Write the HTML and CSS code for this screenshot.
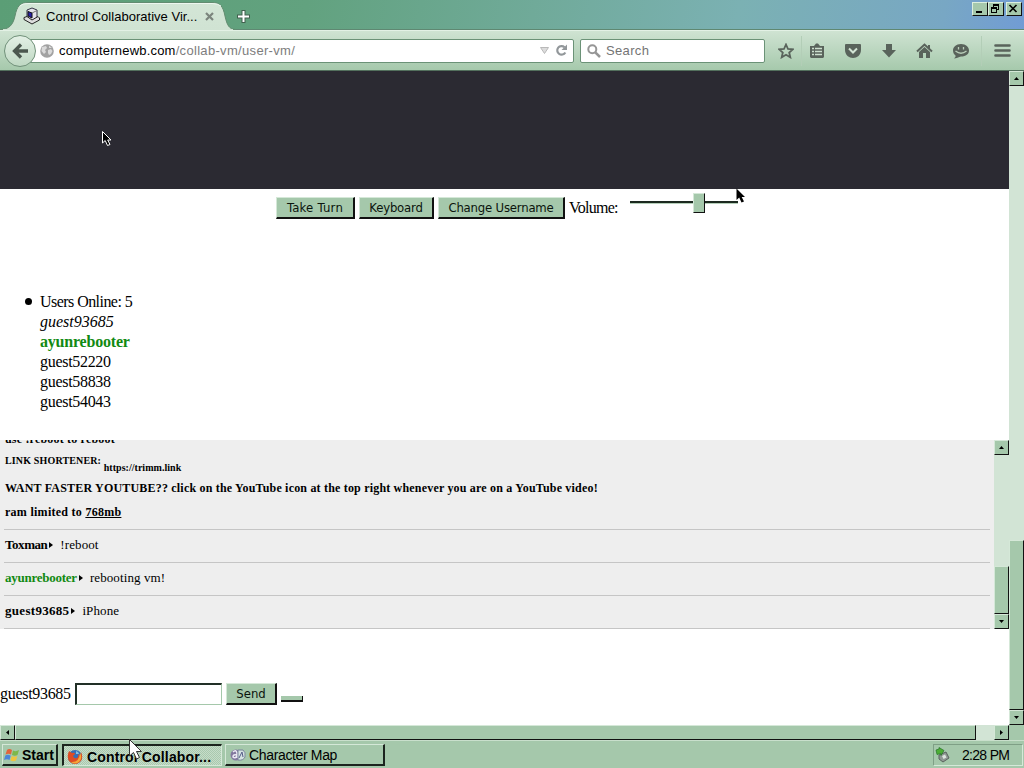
FILE: index.html
```
<!DOCTYPE html>
<html lang="en">
<head>
<meta charset="utf-8">
<title>Control Collaborative Virtual Machines</title>
<link rel="stylesheet" href="styles.css">
</head>
<body>

<div class="titlebar">
  <div class="tab">
    <svg class="tab-shape" width="236" height="29" viewBox="0 0 236 29">
      <defs><linearGradient id="tabfill" x1="0" y1="0" x2="0" y2="1"><stop offset="0" stop-color="#d3e6d6"/><stop offset="1" stop-color="#d0e3d3"/></linearGradient></defs>
      <path d="M0 28.5C9 28.5 13 24 15 15C17 5 20 1.5 28 1.5H212C220 1.5 223 5 225 15C227 24 229 28.5 236 28.5Z" fill="url(#tabfill)" stroke="#628c70"/>
      <path d="M20 5Q22 2.500 28 2.500H212Q218 2.500 221 5" fill="none" stroke="#edf7ef"/>
      <path d="M3 28.5H233" stroke="#d0e3d3"/>
    </svg>
    <svg class="favicon" width="18" height="18" viewBox="0 0 18 18">
      <path d="M4 3L9 1L14 3V11L9 14L4 10Z" fill="#e4e4ea" stroke="#333344"/>
      <path d="M5 4.500L9 6V11L5 9Z" fill="#2820a8" stroke="#111"/>
      <path d="M9 6L14 3.500" stroke="#777"/>
      <path d="M1 10.500L4 9.500L9 13L15 9.500L16.500 11V13L9 17L1 12.500Z" fill="#ddd" stroke="#222"/>
    </svg>
    <span class="tab-title">Control Collaborative Vir...</span>
    <svg class="tab-close" width="9" height="9" viewBox="0 0 9 9"><path d="M1 1L8 8M8 1L1 8" stroke="#7b857d" stroke-width="2.200"/></svg>
  </div>
  <svg class="newtab" width="13" height="13" viewBox="0 0 13 13"><path d="M6.500 0V13M0 6.500H13" stroke="#41604e" stroke-width="4"/><path d="M6.500 1V12M1 6.500H12" stroke="#fff" stroke-width="2"/></svg>
  <div class="winbtns">
    <span class="winbtn"><svg width="15" height="13"><path d="M4 10H10" stroke="#000" stroke-width="2"/></svg></span>
    <span class="winbtn"><svg width="15" height="13" shape-rendering="crispEdges"><path d="M5 2H11V4H5ZM10 3H11V8H9V7H10ZM5 3H6V5H5ZM3 5H9V7H3ZM3 7H4V10H3ZM8 7H9V10H8ZM3 10H9V11H3Z" fill="#000"/></svg></span>
    <span class="winbtn close"><svg width="15" height="13"><path d="M3.500 3L10.500 10M10.500 3L3.500 10" stroke="#000" stroke-width="1.700"/></svg></span>
  </div>
</div>

<div class="toolbar">
  <div class="back"><svg width="18" height="16" viewBox="0 0 18 16"><path d="M9 1.500L2.500 8L9 14.500M3.500 8H16" fill="none" stroke="#4b574e" stroke-width="3.300"/></svg></div>
  <div class="urlbar">
    <svg class="globe" width="14" height="14" viewBox="0 0 14 14"><circle cx="7" cy="7" r="6.800" fill="#a2a2a2"/><path d="M2 3L6 2L7 4L5 6L6 8L4 10L1.500 7ZM8 6L11 5L12.500 7L11 10L9 11L8 9ZM9 1.500L12 4L9 4Z" fill="#dadada"/></svg>
    <span class="url">computernewb.com<span class="path">/collab-vm/user-vm/</span></span>
    <svg class="drop" width="9" height="7" viewBox="0 0 9 7"><path d="M.5 .5H8.500L4.500 6.500Z" fill="#dcdcdc" stroke="#b9b9b9"/></svg>
    <svg class="reload" width="13" height="13" viewBox="0 0 13 13"><path d="M9.500 3.200A4.300 4.300 0 1 0 10.300 8.500" fill="none" stroke="#92979a" stroke-width="2.200"/><path d="M12 .5V6H6.500Z" fill="#92979a"/></svg>
  </div>
  <div class="searchbar">
    <svg width="14" height="14" viewBox="0 0 14 14"><circle cx="5.300" cy="5.300" r="4" fill="none" stroke="#969696" stroke-width="2"/><path d="M8.300 8.300L13 13" stroke="#969696" stroke-width="2.500"/></svg>
    <span>Search</span>
  </div>
  <div class="tools">
    <svg width="16" height="16" viewBox="0 0 16 16"><path d="M8 1.500L10 6L14.800 6.400L11.200 9.500L12.300 14.300L8 11.700L3.700 14.300L4.800 9.500L1.200 6.400L6 6Z" fill="none" stroke="#59635b" stroke-width="1.800"/></svg>
    <i class="sep"></i>
    <svg class="list" width="16" height="16" viewBox="0 0 16 16"><path d="M1 3H5L7 .5H9L11 3H15V14L14 15H2L1 14Z" fill="#59635b"/><path d="M3 5.500H5M6 5.500H13M3 8.500H5M6 8.500H13M3 11.500H5M6 11.500H13" stroke="#cde0cf" stroke-width="1.500"/></svg>
    <svg class="pocket" width="18" height="16" viewBox="0 0 18 16"><path d="M1 2Q1 1 2 1H16Q17 1 17 2V7C17 12 13 15 9 15S1 12 1 7Z" fill="#59635b"/><path d="M5 5.500L9 9.500L13 5.500" fill="none" stroke="#d2e4d4" stroke-width="2"/></svg>
    <svg class="down" width="16" height="16" viewBox="0 0 16 16"><path d="M5 1H11V7H15L8 14.500L1 7H5Z" fill="#59635b"/></svg>
    <svg class="home" width="17" height="16" viewBox="0 0 17 16"><path d="M1 8.500L8.500 1.500L16 8.500" fill="none" stroke="#59635b" stroke-width="2"/><path d="M12 2H14V6H12ZM3 9L8.500 4L14 9V15H10V10H7V15H3Z" fill="#59635b"/></svg>
    <svg class="chat-icon" width="18" height="16" viewBox="0 0 18 16"><path d="M9 1C14 1 17 4 17 7.500S14 13.500 9 13.500C7 14 4 15.500 2 15.500C3 14.500 4 13.500 3.500 12.500C2 11.500 1 9.500 1 7.500C1 4 4 1 9 1Z" fill="#59635b"/><path d="M6.500 4V6.500M11.500 4V6.500" stroke="#b9ceb9" stroke-width="1.300"/><path d="M3.500 8Q9 12.500 14.500 8" fill="none" stroke="#b9ceb9" stroke-width="1.300"/></svg>
    <i class="sep sep-menu"></i>
    <svg class="menu" width="17" height="16" viewBox="0 0 17 16"><path d="M1.500 2.500H15.500M1.500 7.500H15.500M1.500 12.500H15.500" stroke="#59635b" stroke-width="2.600" stroke-linecap="round"/></svg>
  </div>
</div>

<div class="viewport">
  <div class="page">
    <div class="screen"></div>
    <div class="controls">
      <button class="btn turn">Take Turn</button>
      <button class="btn keyboard">Keyboard</button>
      <button class="btn username">Change Username</button>
      <span class="volume">Volume:</span>
      <div class="slider"><i class="before"></i><i class="thumb"></i><i class="after"></i></div>
    </div>
    <ul class="users">
      <li class="count">Users Online: 5</li>
      <li class="me">guest93685</li>
      <li class="bot">ayunrebooter</li>
      <li>guest52220</li>
      <li>guest58838</li>
      <li>guest54043</li>
    </ul>
    <div class="chat">
      <div class="messages">
        <div class="motd">
          <p class="reboot">use !reboot to reboot</p>
          <p class="shortener">LINK SHORTENER: <span class="link">https://trimm.link</span></p>
          <p class="youtube">WANT FASTER YOUTUBE?? click on the YouTube icon at the top right whenever you are on a YouTube video!</p>
          <p class="ram">ram limited to <u>768mb</u></p>
        </div>
        <div class="msg"><b class="toxman">Toxman</b><i class="caret"></i>!reboot</div>
        <div class="msg"><b class="bot">ayunrebooter</b><i class="caret"></i>rebooting vm!</div>
        <div class="msg"><b class="guest">guest93685</b><i class="caret"></i>iPhone</div>
      </div>
      <div class="vscroll">
        <span class="sb"><svg width="5" height="3"><path d="M0 3L2.500 0L5 3Z"/></svg></span>
        <span class="track"></span>
        <span class="sthumb chat-thumb"></span>
        <span class="sb"><svg width="5" height="3"><path d="M0 0L2.500 3L5 0Z"/></svg></span>
      </div>
    </div>
    <div class="send-row">
      <span class="name">guest93685</span>
      <input class="message" type="text">
      <button class="btn send">Send</button>
      <span class="stub"></span>
    </div>
  </div>
  <div class="vscroll">
    <span class="sb"><svg width="5" height="3"><path d="M0 3L2.500 0L5 3Z"/></svg></span>
    <span class="track"></span>
    <span class="sthumb page-thumb"></span>
    <span class="sb"><svg width="5" height="3"><path d="M0 0L2.500 3L5 0Z"/></svg></span>
  </div>
</div>

<div class="hscroll">
  <span class="sb"><svg width="3" height="5"><path d="M3 0L0 2.500L3 5Z"/></svg></span>
  <span class="sthumb h-thumb"></span>
  <span class="track"></span>
  <span class="sb"><svg width="3" height="5"><path d="M0 0L3 2.500L0 5Z"/></svg></span>
  <span class="corner"></span>
</div>

<div class="taskbar">
  <div class="start">
    <svg width="16" height="16" viewBox="0 0 16 16"><path d="M3 3Q5 1 8 3L7 7.500Q4.500 6 1.500 7.500Z" fill="#e2643c"/><path d="M9 3.500Q12 5 15 3L13.500 8Q11 9.500 8 8Z" fill="#7db84a"/><path d="M1.300 8.500Q4 7 6.700 8.700L5.500 13Q3 11.500 0 13Z" fill="#4c86d8"/><path d="M7.700 9Q10.500 10.500 13.300 9L12 13.500Q9 15 6.500 13.500Z" fill="#f0c53e"/></svg>
    <span>Start</span>
  </div>
  <div class="task active">
    <svg width="16" height="16" viewBox="0 0 16 16"><circle cx="8" cy="8" r="7" fill="#356fb5"/><path d="M9 2Q12 3 12 5L9 5Z" fill="#80c2e4"/><path d="M2 2L5 4Q8 3 8 5L6 7Q7 10 10 9Q12 8 11 5Q13 6 13 8L14 3Q17 9 13 13Q8 17 3 13Q-1 9 2 2Z" fill="#dd4d24"/><path d="M13 4Q16 9 12 13Q8 16 4 13Q12 14 13 4Z" fill="#f4a638"/></svg>
    <span>Control Collabor...</span>
  </div>
  <div class="task charmap">
    <svg width="16" height="16" viewBox="0 0 16 16"><ellipse cx="6" cy="8" rx="5.500" ry="5.500" fill="#83789f"/><path d="M3 5Q6 2 7 6V11M7 8Q3 7 3 10Q5 12 7 9" fill="none" stroke="#eceaf4" stroke-width="1.500"/><path d="M8 3H13Q16 5 15 10Q13 14 8 13Z" fill="#d5e3e2" stroke="#79849a"/><path d="M9 11L12 5L13 10" fill="none" stroke="#555c88"/></svg>
    <span>Character Map</span>
  </div>
  <div class="tray">
    <svg width="16" height="16" viewBox="0 0 16 16"><path d="M4 8L11 5L14 11L8 15L4 12Z" fill="#8f9893" stroke="#59635e"/><path d="M7 9L10 7.500L11.500 10.500L8.500 12Z" fill="#dce4de"/><path d="M1 3L4 2V.5L9 3.500L6 8.500V6.500L2 7.500Z" fill="#4cae35" stroke="#27732a" stroke-width=".7"/></svg>
    <span>2:28 PM</span>
  </div>
</div>

<!-- pointers -->
<svg class="pointer p-remote" width="12" height="19" viewBox="0 0 12 19"><path d="M.5 .5V12L3.200 9.500L5.500 14.500L8 13.500L5.700 9H9Z" fill="#000" stroke="#fff"/></svg>
<svg class="pointer p-page" width="12" height="19" viewBox="0 0 12 19"><path d="M.5 .5V12L3.200 9.500L5.500 14.500L8 13.500L5.700 9H9Z" fill="#000"/></svg>
<svg class="pointer p-host" width="14" height="23" viewBox="0 0 14 23"><path d="M.5 .5V17L4.500 13.500L7.500 20L10.500 18.500L7.500 12.500H12.500Z" fill="#fff" stroke="#333"/></svg>

</body>
</html>
```
FILE: styles.css
```
* { box-sizing: border-box; }

body {
	margin: 0;
	width: 1024px;
	height: 768px;
	overflow: hidden;
	display: flex;
	flex-direction: column;
	position: relative;
	background: #a5c8ab;
	font-family: "Liberation Sans", Arial, sans-serif;
	color: #000;
}

svg { display: block; flex: none; }

/* Browser window */
.titlebar {
	height: 30px;
	flex: none;
	display: flex;
	align-items: flex-start;
	background: linear-gradient(100deg, #5b9e76 0%, #62a27f 30%, #70aa99 52%, #7bb1b3 72%, #78a7c4 92%, #719cd5 100%);
	border-bottom: 1px solid #5f8872;
}

.tab {
	position: relative;
	width: 236px;
	height: 30px;
	display: flex;
	align-items: center;
	padding: 2px 0 0 23px;
}

.tab-shape {
	position: absolute;
	left: 0;
	top: 1px;
}

.favicon, .tab-title, .tab-close { position: relative; }

.tab-title {
	margin-left: 5px;
	width: 152px;
	font-size: 13px;
	letter-spacing: 0.02px;
	white-space: nowrap;
}

.tab-close { margin-left: 7px; }
.newtab { margin: 10px 0 0 1px; }

.winbtns {
	margin: 2px 2px 0 auto;
	display: flex;
}

.winbtn {
	width: 16px;
	height: 14px;
	background: #a5c8ab;
	border: 1px solid #dcefdf;
	border-right-color: #111;
	border-bottom-color: #111;
}

.winbtn svg { margin: -1px 0 0 -1px; }
.winbtn.close { margin-left: 2px; }

.toolbar {
	height: 41px;
	flex: none;
	display: flex;
	align-items: center;
	background: linear-gradient(#cfe3d2, #a6c9ac);
	border-top: 1px solid #e3f1e5;
	border-bottom: 1px solid #53705d;
}

.back {
	position: relative;
	z-index: 1;
	width: 32px;
	height: 32px;
	margin: 0 0 0 4px;
	display: flex;
	align-items: center;
	justify-content: center;
	border: 1px solid #71917a;
	border-radius: 50%;
	background: linear-gradient(#e3f0e5, #bfd8c3);
}

.back svg { margin-left: 1px; }

.urlbar, .searchbar {
	height: 24px;
	display: flex;
	align-items: center;
	background: #fff;
	border: 1px solid #6b9277;
	border-radius: 2px;
}

.urlbar {
	width: 546px;
	margin-left: -8px;
	padding: 0 5px 0 11px;
}

.url {
	margin-left: 5px;
	font-size: 13px;
	letter-spacing: 0.2px;
}

.path {
	color: #7d7d7d;
	letter-spacing: 0.32px;
}

.drop { margin-left: auto; }
.reload { margin-left: 6px; }

.searchbar {
	width: 185px;
	margin-left: 6px;
	padding-left: 6px;
	font-size: 13px;
	letter-spacing: 0.35px;
	color: #747474;
}

.searchbar span { margin-left: 5px; }

.tools {
	display: flex;
	align-items: center;
	margin-left: 13px;
}

.sep {
	width: 1px;
	height: 30px;
	margin-left: 7px;
	background: #b3ceb7;
}

.list { margin-left: 7px; }
.pocket { margin-left: 19px; }
.down { margin-left: 19px; }
.home { margin-left: 19px; }
.chat-icon { margin-left: 19px; }
.sep-menu { margin-left: 11px; }
.menu { margin-left: 12px; }

.viewport {
	height: 654px;
	flex: none;
	display: flex;
}

.page {
	width: 1009px;
	height: 654px;
	background: #fff;
	overflow: hidden;
	font: 16px/20px "Liberation Serif", "Times New Roman", serif;
}

.screen {
	height: 118px;
	background: #2b2a32;
}

/* Controls */
.controls {
	height: 103px;
	padding: 8px 0 0 276px;
	display: flex;
	align-items: flex-start;
	gap: 4px;
}

.btn {
	height: 22px;
	padding: 1px 0 0;
	background: #a5c8ab;
	border: 1px solid #d5e8d8;
	border-right: 2px solid #111;
	border-bottom: 2px solid #111;
	border-radius: 0;
	font: 13px/18px "DejaVu Sans Condensed", "DejaVu Sans", sans-serif;
	color: #0b140d;
	white-space: nowrap;
}

.turn {
	width: 79px;
	letter-spacing: 0.25px;
}

.keyboard {
	width: 75px;
	letter-spacing: -0.2px;
}

.username {
	width: 127px;
	letter-spacing: -0.2px;
}

.volume {
	width: 57px;
	padding-top: 1px;
	letter-spacing: -0.75px;
}

.slider {
	height: 21px;
	margin-top: -5px;
	display: flex;
	align-items: center;
}

.before, .after {
	height: 3px;
	background: #1c2a20;
	border-bottom: 1px solid #b5cfb9;
}

.before { width: 63px; }
.after { width: 33px; }

.thumb {
	width: 12px;
	height: 20px;
	background: #a5c8ab;
	border: 1px solid #d5e8d8;
	border-right-color: #111;
	border-bottom-color: #111;
}

.users {
	height: 148px;
	margin: 0;
	padding: 0 0 0 40px;
	list-style: none;
	letter-spacing: -0.3px;
}

.count { letter-spacing: -0.55px; }

.count::before {
	content: "";
	display: inline-block;
	width: 7px;
	height: 7px;
	margin: 0 8px 2px -15px;
	border-radius: 50%;
	background: #000;
}

.me {
	font-style: italic;
	letter-spacing: 0;
}

.bot {
	color: #128a12;
	font-weight: bold;
	letter-spacing: -0.2px;
}

/* Chat */
.chat {
	height: 189px;
	display: flex;
	background: #eee;
}

.messages {
	width: 994px;
	height: 189px;
	padding: 0 4px;
	overflow: hidden;
	display: flex;
	flex-direction: column;
	justify-content: flex-end;
	font-size: 13px;
}

.motd {
	flex: none;
	height: 101px;
	padding-left: 1px;
	font-weight: bold;
	font-size: 12px;
	letter-spacing: 0.19px;
	border-bottom: 1px solid #c5c5c5;
}

.motd p { margin: 0; }

.reboot {
	height: 22px;
	line-height: 20px;
}

.shortener {
	height: 27px;
	font-size: 10px;
	line-height: 20px;
	letter-spacing: 0.15px;
}

.link {
	position: relative;
	top: 7px;
	letter-spacing: 0.03px;
}

.youtube { height: 24px; }

.ram {
	height: 27px;
	letter-spacing: 0.27px;
}

.msg {
	height: 33px;
	flex: none;
	display: flex;
	align-items: center;
	padding: 0 0 2px 1px;
	border-bottom: 1px solid #c5c5c5;
	line-height: 20px;
	letter-spacing: 0.1px;
}

.toxman { letter-spacing: -0.45px; }
.msg .bot { letter-spacing: -0.25px; }
.guest { letter-spacing: 0.3px; }

.caret {
	margin: 0 7px 0 2px;
	border-left: 4px solid #000;
	border-top: 3px solid transparent;
	border-bottom: 3px solid transparent;
}

.send-row {
	display: flex;
	align-items: center;
	padding-top: 54px;
}

.name {
	width: 75px;
	letter-spacing: -0.3px;
}

.message {
	width: 147px;
	height: 22px;
	border: 1px solid #a5c8ab;
	border-top: 2px solid #223027;
	border-left: 2px solid #223027;
	background: #fff;
}

.send {
	width: 51px;
	margin-left: 4px;
}

.stub {
	width: 22px;
	height: 6px;
	margin: 10px 0 0 4px;
	background: #a5c8ab;
	border-right: 1px solid #111;
	border-bottom: 2px solid #111;
}

/* Scrollbars */
.vscroll {
	width: 15px;
	flex: none;
	display: flex;
	flex-direction: column;
}

.hscroll {
	height: 15px;
	flex: none;
	display: flex;
}

.track {
	flex: 1;
	background: #d2e4d5;
}

.sb, .sthumb {
	flex: none;
	background: #a5c8ab;
	border: 1px solid #d5e8d8;
	border-right-color: #111;
	border-bottom-color: #111;
}

.sb {
	width: 15px;
	height: 15px;
	display: flex;
	align-items: center;
	justify-content: center;
}

.chat-thumb { height: 48px; }
.page-thumb { height: 170px; }
.h-thumb { width: 961px; }
.corner { width: 15px; }

/* Taskbar */
.taskbar {
	height: 28px;
	flex: none;
	display: flex;
	padding-top: 3px;
	border-top: 1px solid #c9dfcc;
	font-size: 14px;
}

.start, .task {
	height: 22px;
	display: flex;
	align-items: center;
	border: 1px solid #d5e8d8;
	border-right: 2px solid #1c241e;
	border-bottom: 2px solid #1c241e;
	white-space: nowrap;
}

.start {
	width: 56px;
	margin-left: 2px;
	padding-left: 1px;
	font-weight: bold;
}

.start span { margin-left: 2px; }

.task {
	width: 160px;
	margin-left: 4px;
	padding-left: 4px;
}

.task span { margin-left: 3px; }

.active {
	padding: 2px 0 0 3px;
	border: 2px solid #1c241e;
	border-right: 1px solid #d5e8d8;
	border-bottom: 1px solid #d5e8d8;
	background: repeating-conic-gradient(#c6dcc9 0 25%, #a9c9ae 0 50%) 0 0 / 2px 2px;
	font-weight: bold;
	letter-spacing: 0.15px;
}

.active span { margin-left: 4px; }

.charmap {
	margin-left: 3px;
	letter-spacing: -0.35px;
}

.tray {
	width: 90px;
	height: 22px;
	margin: 0 1px 0 auto;
	display: flex;
	align-items: center;
	padding-left: 1px;
	border: 1px solid #7f9f86;
	border-right-color: #d5e8d8;
	border-bottom-color: #d5e8d8;
	letter-spacing: -0.7px;
}

.tray span { margin-left: 11px; }

/* Mouse pointers lie over everything else */
.pointer { position: absolute; }

.p-remote {
	left: 102px;
	top: 131px;
}

.p-page {
	left: 736px;
	top: 188px;
}

.p-host {
	left: 129px;
	top: 739px;
}
```
